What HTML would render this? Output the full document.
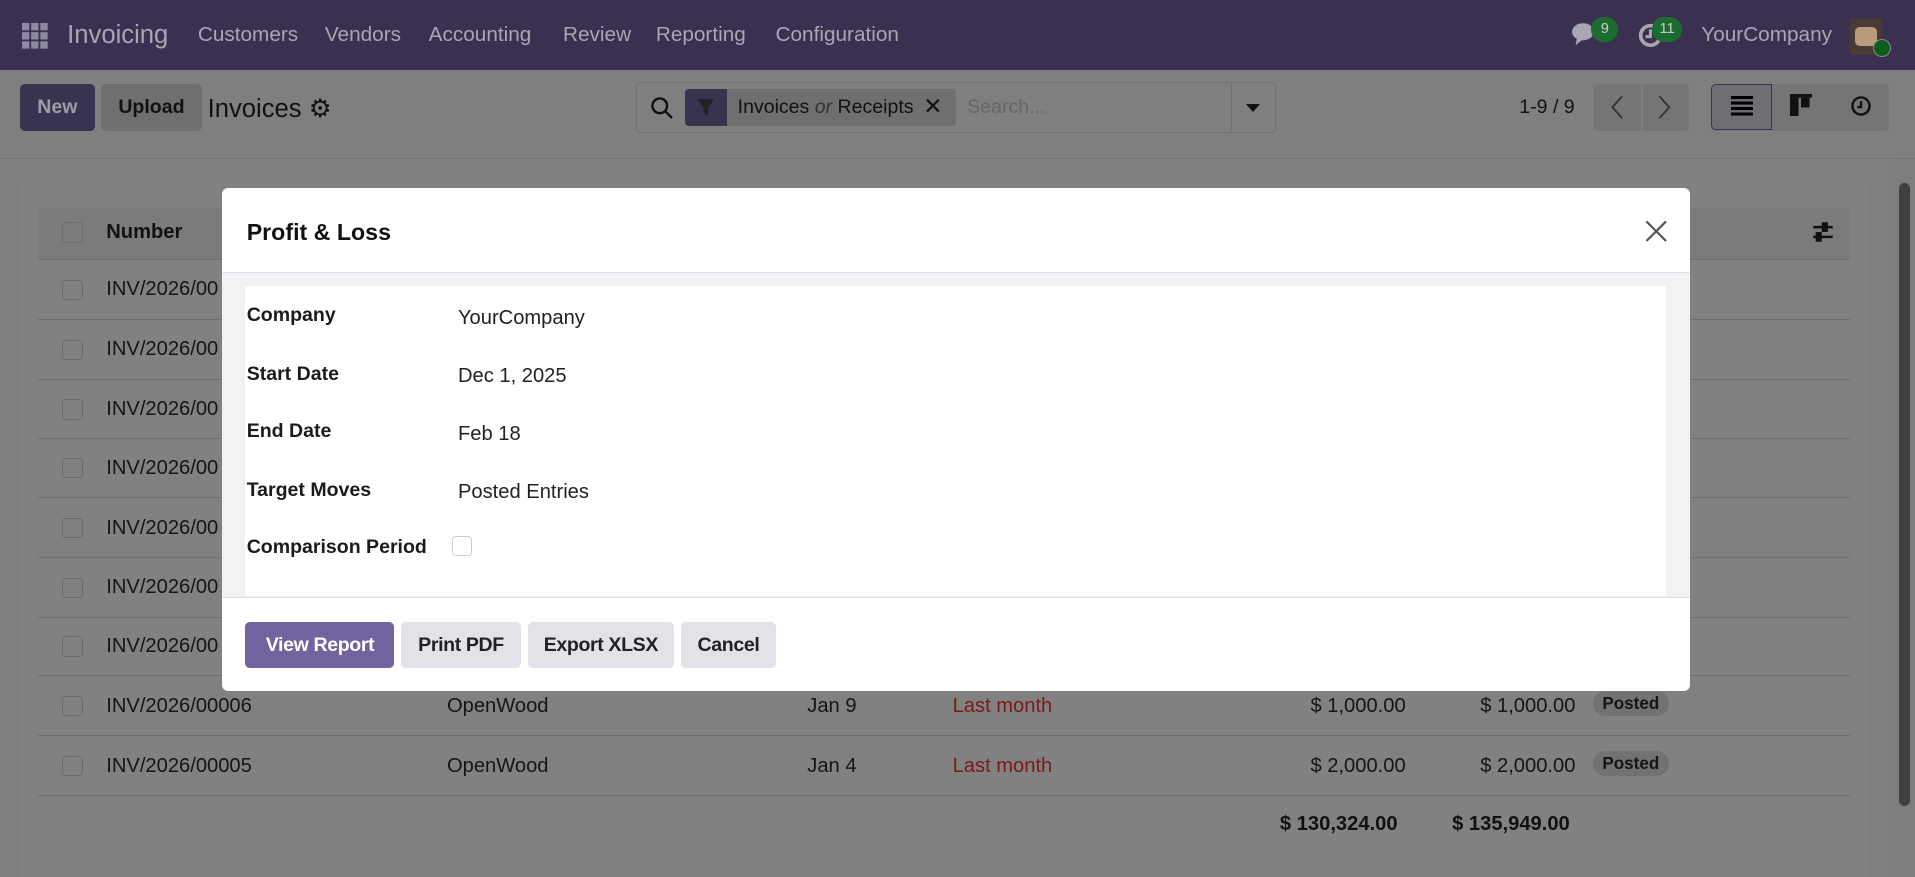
<!DOCTYPE html>
<html><head><meta charset="utf-8"><style>
html,body{margin:0;padding:0;overflow:hidden}
body{width:1568px;height:718px;zoom:1.22130;font-family:"Liberation Sans",sans-serif;background:#7f7f7f;position:relative;color:#111}
.abs{position:absolute}
.nav{left:0;top:0;width:1568px;height:57px;background:#39314f;color:#a9a6b3;font-size:17px}
.nav span{position:absolute;top:19px}
.cp{top:57px;left:0;width:1568px;height:72px;border-bottom:1px solid #737373}
.btn{position:absolute;border-radius:4px;font-size:17px;text-align:center}
.card{left:16px;top:150px;width:1514px;height:580px;background:#818181;border-radius:6px}
.row{position:absolute;left:31px;width:1484px;border-bottom:1px solid #6f6f6f;height:48px}
.row span{position:absolute;top:15px;font-size:16.5px;color:#151515}
.cb{position:absolute;left:20px;top:16px;width:15px;height:15px;border:1px solid #6c6c6c;border-radius:3px}
.modal{left:182px;top:154px;width:1202px;height:412px;background:#fff;border-radius:5px}
.lbl{position:absolute;left:20px;font-size:16px;font-weight:bold;color:#1b1b1b}
.val{position:absolute;left:193px;font-size:16.5px;color:#222}
.mb{position:absolute;top:355px;height:38px;line-height:38px;border-radius:4px;font-size:16px;background:#e1e3e8;color:#222;text-align:center;font-weight:bold;letter-spacing:-0.3px}
</style></head><body>
<div class="abs nav">
<svg class="abs" style="left:18px;top:19px" width="21" height="21" viewBox="0 0 21 21" fill="#8d89a0"><rect x="0" y="0" width="6" height="6"/><rect x="7.5" y="0" width="6" height="6"/><rect x="15" y="0" width="6" height="6"/><rect x="0" y="7.5" width="6" height="6"/><rect x="7.5" y="7.5" width="6" height="6"/><rect x="15" y="7.5" width="6" height="6"/><rect x="0" y="15" width="6" height="6"/><rect x="7.5" y="15" width="6" height="6"/><rect x="15" y="15" width="6" height="6"/></svg>
<span style="left:55px;top:17px;font-size:21px">Invoicing</span>
<span style="left:162px">Customers</span><span style="left:266px">Vendors</span><span style="left:351px">Accounting</span><span style="left:461px">Review</span><span style="left:537px">Reporting</span><span style="left:635px">Configuration</span>
<svg class="abs" style="left:1287px;top:18px" width="24" height="22" viewBox="0 0 24 22" fill="#a9a6b3"><ellipse cx="9" cy="8" rx="9" ry="7"/><path d="M4 13 L3 19 L9 14Z"/></svg>
<div class="abs" style="left:1303px;top:14px;width:22px;height:20px;border-radius:10px;background:#1c6b31;color:#ccc;font-size:12px;text-align:center;line-height:20px">9</div>
<svg class="abs" style="left:1340px;top:18px" width="22" height="22" viewBox="0 0 22 22"><circle cx="11" cy="11" r="8" fill="none" stroke="#a9a6b3" stroke-width="3"/><path d="M11 6v6h-4" stroke="#a9a6b3" stroke-width="2.5" fill="none"/></svg>
<div class="abs" style="left:1353px;top:14px;width:24px;height:20px;border-radius:10px;background:#1c6b31;color:#ccc;font-size:12px;text-align:center;line-height:20px">11</div>
<span style="left:1393px">YourCompany</span>
<div class="abs" style="left:1515px;top:15px;width:26px;height:30px;background:#4a3a36;border-radius:3px"><div style="margin:7px 4px;width:18px;height:16px;background:#b89b7c;border-radius:4px"></div></div>
<div class="abs" style="left:1534px;top:32px;width:13px;height:13px;border-radius:50%;background:#0d5d1d;border:1px solid #888"></div>
</div>
<div class="abs cp">
<div class="btn" style="left:16px;top:12px;width:62px;height:38px;line-height:38px;background:#3a3350;color:#9f9caa;font-weight:bold;font-size:16px">New</div>
<div class="btn" style="left:83px;top:12px;width:82px;height:38px;line-height:38px;background:#6e6f71;color:#111;font-weight:bold;font-size:16px">Upload</div>
<div class="abs" style="left:170px;top:20px;font-size:21px;color:#111">Invoices ⚙</div>
<div class="abs" style="left:521px;top:10px;width:522px;height:40px;border:1px solid #6f6f6f;border-radius:4px"></div>
<svg class="abs" style="left:532px;top:22px" width="20" height="20" viewBox="0 0 20 20"><circle cx="8" cy="8" r="6" stroke="#111" stroke-width="2" fill="none"/><path d="M12.5 12.5L18 18" stroke="#111" stroke-width="2"/></svg>
<div class="abs" style="left:561px;top:16px;width:222px;height:30px;background:#6e6f71;border-radius:3px"></div>
<div class="abs" style="left:561px;top:16px;width:34px;height:30px;background:#3a3350;border-radius:3px 0 0 3px"></div>
<svg class="abs" style="left:570px;top:23px" width="16" height="16" viewBox="0 0 16 16"><path d="M1 1h14l-5 7v6l-4-2V8z" fill="#222"/></svg>
<div class="abs" style="left:604px;top:22px;font-size:16px;color:#111">Invoices <i style="color:#333">or</i> Receipts</div>
<div class="abs" style="left:756px;top:19px;font-size:19px;color:#111">✕</div>
<div class="abs" style="left:792px;top:22px;font-size:16px;color:#666">Search...</div>
<div class="abs" style="left:1008px;top:10px;width:1px;height:40px;background:#6f6f6f"></div>
<div class="abs" style="left:1020px;top:28px;border-left:6px solid transparent;border-right:6px solid transparent;border-top:7px solid #111"></div>
<div class="abs" style="left:1244px;top:22px;font-size:16px;color:#111">1-9 / 9</div>
<div class="abs" style="left:1305px;top:12px;width:78px;height:38px;background:#757575;border-radius:4px"></div>
<div class="abs" style="left:1344px;top:12px;width:1px;height:38px;background:#7f7f7f"></div>
<svg class="abs" style="left:1318px;top:21px" width="12" height="20"><path d="M10 1L2 10l8 9" stroke="#333" stroke-width="1.5" fill="none"/></svg>
<svg class="abs" style="left:1357px;top:21px" width="12" height="20"><path d="M2 1l8 9-8 9" stroke="#333" stroke-width="1.5" fill="none"/></svg>
<div class="abs" style="left:1401px;top:12px;width:146px;height:38px;background:#757575;border-radius:4px"></div>
<div class="abs" style="left:1401px;top:12px;width:48px;height:36px;border:1px solid #3a3350;background:#6f6e75;border-radius:4px 0 0 4px"></div>
<svg class="abs" style="left:1417px;top:22px" width="18" height="16"><rect y="0" width="18" height="2.5" fill="#000"/><rect y="4.5" width="18" height="2.5" fill="#000"/><rect y="9" width="18" height="2.5" fill="#000"/><rect y="13.5" width="18" height="2.5" fill="#000"/></svg>
<svg class="abs" style="left:1466px;top:20px" width="18" height="18"><rect width="18" height="3" fill="#111"/><rect y="3" width="7" height="15" fill="#111"/><rect x="9" y="3" width="7" height="8" fill="#111"/></svg>
<svg class="abs" style="left:1515px;top:21px" width="18" height="18" viewBox="0 0 18 18"><circle cx="9" cy="9" r="7" fill="none" stroke="#111" stroke-width="2"/><path d="M9 5v5H6" stroke="#111" stroke-width="2" fill="none"/></svg>
</div>
<div class="abs card"></div>
<div class="abs" style="left:31px;top:170px;width:1484px;height:42px;background:#7b7b7b;border-bottom:1px solid #6f6f6f">
<div class="cb" style="top:12px"></div><span class="abs" style="left:56px;top:11px;font-size:16.5px;font-weight:bold">Number</span>
<svg class="abs" style="left:1453px;top:11px" width="18" height="18" viewBox="0 0 18 18" stroke="#111" stroke-width="2"><path d="M1 5h16M1 13h16"/><rect x="9" y="2" width="3" height="6" fill="#111"/><rect x="4" y="10" width="3" height="6" fill="#111"/></svg>
</div>
<div class="row" style="top:213px"><div class="cb"></div><span style="left:56px">INV/2026/00</span></div>
<div class="row" style="top:262px"><div class="cb"></div><span style="left:56px">INV/2026/00</span></div>
<div class="row" style="top:311px"><div class="cb"></div><span style="left:56px">INV/2026/00</span></div>
<div class="row" style="top:359px"><div class="cb"></div><span style="left:56px">INV/2026/00</span></div>
<div class="row" style="top:408px"><div class="cb"></div><span style="left:56px">INV/2026/00</span></div>
<div class="row" style="top:457px"><div class="cb"></div><span style="left:56px">INV/2026/00</span></div>
<div class="row" style="top:505px"><div class="cb"></div><span style="left:56px">INV/2026/00</span></div>
<div class="row" style="top:554px"><div class="cb"></div><span style="left:56px">INV/2026/00006</span><span style="left:335px">OpenWood</span><span style="left:630px">Jan 9</span><span style="left:749px;color:#7a1a1a">Last month</span><span style="left:1042px">$ 1,000.00</span><span style="left:1181px">$ 1,000.00</span><span style="left:1273px;top:12px;background:#727272;border-radius:10px;padding:2px 8px;font-size:14px;font-weight:bold">Posted</span></div>
<div class="row" style="top:603px"><div class="cb"></div><span style="left:56px">INV/2026/00005</span><span style="left:335px">OpenWood</span><span style="left:630px">Jan 4</span><span style="left:749px;color:#7a1a1a">Last month</span><span style="left:1042px">$ 2,000.00</span><span style="left:1181px">$ 2,000.00</span><span style="left:1273px;top:12px;background:#727272;border-radius:10px;padding:2px 8px;font-size:14px;font-weight:bold">Posted</span></div>
<div class="abs" style="left:1048px;top:666px;font-size:16.5px;font-weight:bold">$ 130,324.00</div>
<div class="abs" style="left:1189px;top:666px;font-size:16.5px;font-weight:bold">$ 135,949.00</div>
<div class="abs" style="left:1552px;top:130px;width:16px;height:588px;background:#7d7d7d"><div style="margin:20px 3px;width:9px;height:510px;background:#3f3f3f;border-radius:5px"></div></div>
<div class="abs modal">
<div class="abs" style="left:20px;top:25px;font-size:19px;font-weight:bold;color:#111">Profit &amp; Loss</div>
<svg class="abs" style="left:1164px;top:25px" width="20" height="20"><path d="M2 2l16 16M18 2L2 18" stroke="#555" stroke-width="1.8"/></svg>
<div class="abs" style="left:0;top:69px;width:1202px;height:265px;background:#f1f2f4;border-top:1px solid #dee0e4;border-bottom:1px solid #dee0e4"></div>
<div class="abs" style="left:19px;top:80px;width:1163px;height:254px;background:#fff"></div>
<div class="lbl" style="top:95px">Company</div><div class="val" style="top:97px">YourCompany</div>
<div class="lbl" style="top:143px">Start Date</div><div class="val" style="top:145px">Dec 1, 2025</div>
<div class="lbl" style="top:190px">End Date</div><div class="val" style="top:192px">Feb 18</div>
<div class="lbl" style="top:238px">Target Moves</div><div class="val" style="top:240px">Posted Entries</div>
<div class="lbl" style="top:285px">Comparison Period</div>
<div class="abs" style="left:188px;top:285px;width:15px;height:15px;border:1px solid #ccc;border-radius:3px"></div>
<div class="mb" style="left:19px;width:122px;background:#71639e;color:#fff">View Report</div>
<div class="mb" style="left:146px;width:99px">Print PDF</div>
<div class="mb" style="left:250px;width:120px">Export XLSX</div>
<div class="mb" style="left:376px;width:77px">Cancel</div>
</div>
</body></html>
